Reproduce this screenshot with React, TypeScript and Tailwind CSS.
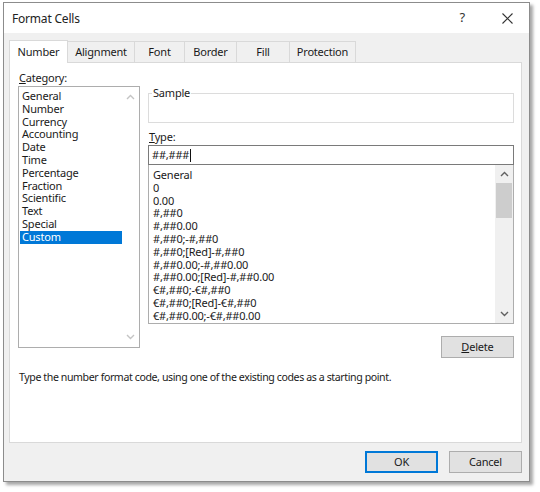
import React from 'react';

const categories = [
  'General',
  'Number',
  'Currency',
  'Accounting',
  'Date',
  'Time',
  'Percentage',
  'Fraction',
  'Scientific',
  'Text',
  'Special',
  'Custom',
];

const formats = [
  'General',
  '0',
  '0.00',
  '#,##0',
  '#,##0.00',
  '#,##0;-#,##0',
  '#,##0;[Red]-#,##0',
  '#,##0.00;-#,##0.00',
  '#,##0.00;[Red]-#,##0.00',
  '€#,##0;-€#,##0',
  '€#,##0;[Red]-€#,##0',
  '€#,##0.00;-€#,##0.00',
];

const tabs = [
  { label: 'Alignment', w: 'w-[67px]' },
  { label: 'Font', w: 'w-[50px]' },
  { label: 'Border', w: 'w-[52px]' },
  { label: 'Fill', w: 'w-[53px]' },
  { label: 'Protection', w: 'w-[66px]' },
];

const Chevron: React.FC<{ up?: boolean; color: string }> = ({ up, color }) => (
  <svg width="9" height="6" viewBox="0 0 9 6" className="block">
    <path d={up ? 'M1 5 L4.5 1.5 L8 5' : 'M1 1 L4.5 4.5 L8 1'} fill="none" stroke={color} strokeWidth="1.4" />
  </svg>
);

const App: React.FC = () => {
  return (
    <div
      className="w-[540px] h-[492px] bg-white pt-[2px] pl-[3px] text-[11px] tracking-[-0.2px] text-[#1a1a1a]"
      style={{ fontFamily: '"Noto Sans", "Open Sans", sans-serif' }}
    >
      <div className="w-[527px] h-[480px] border border-[#8c8c8c] bg-[#f0f0f0] flex flex-col shadow-[3px_3px_3px_rgba(0,0,0,0.35)]">
        {/* title bar */}
        <div className="h-[30px] bg-white flex items-center pl-[8px] pr-[16px] shrink-0">
          <span className="text-[12px] text-[#222] mt-[1px]">Format Cells</span>
          <span className="ml-auto mr-[37px] text-[13px] text-[#333]">?</span>
          <svg width="11" height="11" viewBox="0 0 11 11">
            <path d="M0.5 0.5 L10.5 10.5 M10.5 0.5 L0.5 10.5" stroke="#333" strokeWidth="1.1" />
          </svg>
        </div>

        {/* tabs */}
        <div className="flex items-end pl-[5px] pt-[7px] shrink-0">
          <div className="h-[23px] w-[59px] bg-white border border-b-0 border-[#d9d9d9] flex items-center justify-center relative z-10 -mb-px">
            Number
          </div>
          {tabs.map(t => (
            <div
              key={t.label}
              className={`${t.w} h-[21px] border border-l-0 border-b-0 border-[#d9d9d9] bg-[#f0f0f0] flex items-center justify-center`}
            >
              {t.label}
            </div>
          ))}
        </div>

        {/* panel */}
        <div className="mx-[5px] w-[513px] h-[381px] bg-white border border-[#d9d9d9] flex flex-col pt-[7px] pl-[8px] shrink-0">
          <div className="flex gap-[8px]">
            {/* category column */}
            <div className="flex flex-col w-[122px]">
              <div className="h-[16px] leading-[16px] pl-[1px]">
                <span className="underline">C</span>ategory:
              </div>
              <div className="h-[262px] border border-[#adadad] flex">
                <div className="flex-1 pt-[3px] pl-[1px]">
                  {categories.map(c => (
                    <div
                      key={c}
                      className={
                        c === 'Custom'
                          ? 'h-[12.8px] leading-[12.8px] pl-[2px] bg-[#0078d7] text-white'
                          : 'h-[12.8px] leading-[12.8px] pl-[2px]'
                      }
                    >
                      {c}
                    </div>
                  ))}
                </div>
                <div className="w-[17px] flex flex-col items-center justify-between py-[7px]">
                  <Chevron up color="#c4c4c4" />
                  <Chevron color="#c4c4c4" />
                </div>
              </div>
            </div>

            {/* type column */}
            <div className="flex flex-col w-[366px]">
              <div className="relative mt-[23px] h-[30px] border border-[#dcdcdc]">
                <span className="absolute left-[3px] -top-[8px] bg-white px-[1px] leading-[14px]">Sample</span>
              </div>
              <div className="mt-[6px] h-[16px] leading-[16px] pl-[1px]">
                <span className="underline">T</span>ype:
              </div>
              <div className="h-[20px] border border-[#7a7a7a] flex items-center pl-[3px]">
                ##,###<span className="inline-block w-px h-[13px] bg-[#111] ml-[1px]" />
              </div>
              <div className="h-[159px] border border-[#adadad] border-t-0 flex">
                <div className="flex-1 pt-[4px] pl-[4px]">
                  {formats.map(f => (
                    <div key={f} className="h-[12.8px] leading-[12.8px] whitespace-nowrap">
                      {f}
                    </div>
                  ))}
                </div>
                <div className="w-[18px] bg-[#f0f0f0] flex flex-col items-center">
                  <div className="h-[18px] flex items-center justify-center">
                    <Chevron up color="#606060" />
                  </div>
                  <div className="w-[16px] h-[35px] bg-[#cdcdcd]" />
                  <div className="mt-auto h-[18px] flex items-center justify-center">
                    <Chevron color="#606060" />
                  </div>
                </div>
              </div>
              <div className="flex justify-end mt-[12px]">
                <div className="w-[73px] h-[22px] bg-[#e1e1e1] border border-[#adadad] flex items-center justify-center">
                  <span className="underline">D</span>elete
                </div>
              </div>
            </div>
          </div>
          <div className="mt-[12px] pl-[1px] text-[10.6px] tracking-[-0.4px] whitespace-nowrap">
            Type the number format code, using one of the existing codes as a starting point.
          </div>
        </div>

        {/* footer */}
        <div className="flex justify-end gap-[11px] pr-[7px] mt-[8px]">
          <div className="w-[73px] h-[22px] bg-[#e1e1e1] border-2 border-[#0078d7] flex items-center justify-center">
            OK
          </div>
          <div className="w-[73px] h-[22px] bg-[#e1e1e1] border border-[#adadad] flex items-center justify-center">
            Cancel
          </div>
        </div>
      </div>
    </div>
  );
};

export default App;
